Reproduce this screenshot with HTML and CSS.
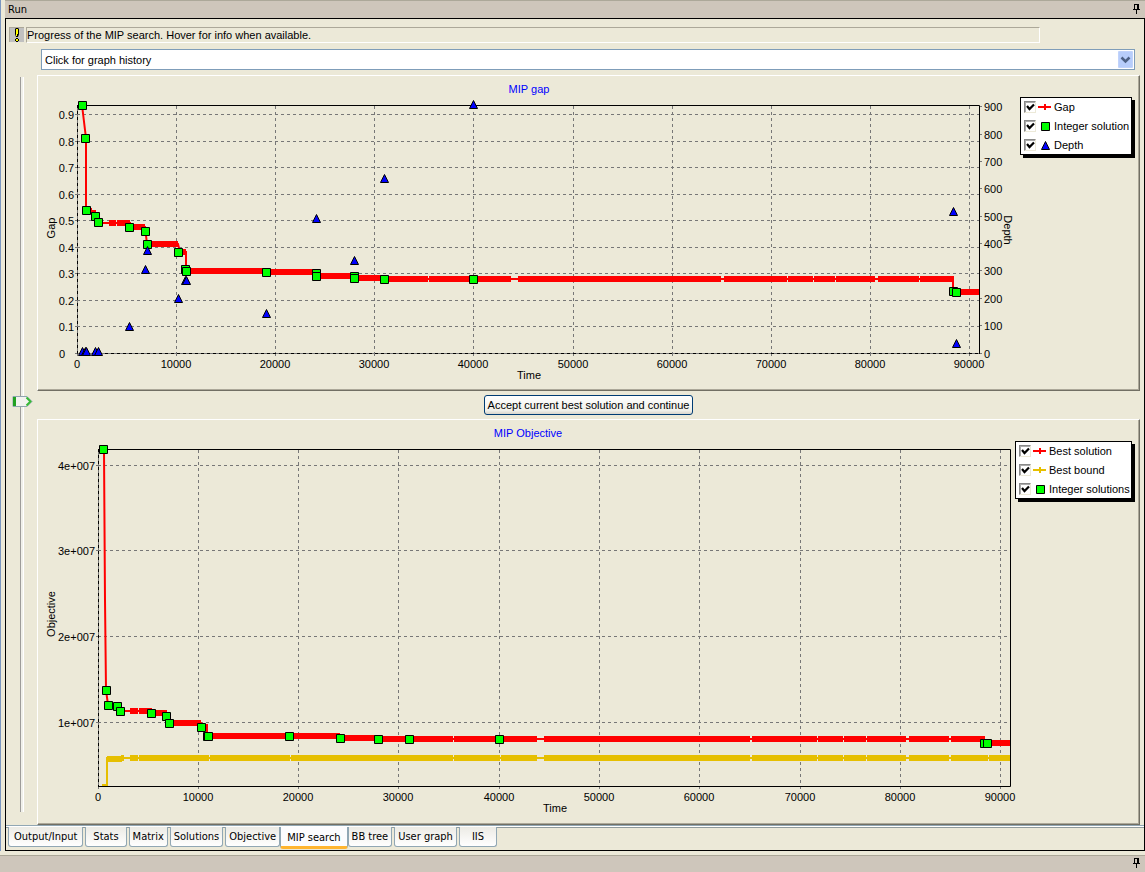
FILE: index.html
```
<!DOCTYPE html>
<html lang="en">
<head>
<meta charset="utf-8">
<title>Run</title>
<link rel="stylesheet" href="styles.css">
</head>
<body>
<svg class="defs" aria-hidden="true">
  <defs>
    <marker id="square" markerUnits="userSpaceOnUse" markerWidth="10" markerHeight="10" refX="5" refY="5">
      <path d="M1 1h8v8H1z" fill="#00ff00" stroke="#000"/>
    </marker>
    <marker id="triangle" markerUnits="userSpaceOnUse" markerWidth="10" markerHeight="10" refX="5" refY="5">
      <path d="M5 1L9 9H1Z" fill="#0000ff" stroke="#000"/>
    </marker>
    <symbol id="pin" viewBox="0 0 8 10">
      <path d="M1 0h5v5h1v1H4v4H3V6H0V5h1zM2 1v4h2V1z" fill-rule="evenodd"/>
    </symbol>
  </defs>
</svg>
<div class="app">
  <section class="window">
    <header class="titlebar"><span>Run</span><svg class="pin"><use href="#pin"/></svg></header>
    <main class="body">
      <div class="status">
        <svg class="alert" viewBox="0 0 15 15"><path fill="#c0c0c0" d="M0 0h15v15H0z"/><path d="M0 0h15v1H1v14H0z" fill="#aca899"/><path d="M7 1h2l1 1v5L9 10H7L6 7V2z"/><path d="M7 2h2v5H8v2H7z" fill="#ff0"/><path d="M7 11h2v1h1v2H9v1H7v-1H6v-2h1z"/><path fill="#ff0" d="M7 12h2v2H7z"/></svg>
        <p class="message">Progress of the MIP search. Hover for info when available.</p>
      </div>
      <div class="history">
        <select aria-label="Graph history"><option>Click for graph history</option></select>
        <svg class="arrow" viewBox="0 0 15 17"><rect width="15" height="17" rx="1" fill="#c1d3fb"/><rect x="1" y="1" width="13" height="15" fill="#b7cdfb"/><path d="M3.500 6.500l4 4 4-4" fill="none" stroke="#4d6185" stroke-width="2.500"/></svg>
      </div>
      <div class="workspace">
        <input class="splitter" type="range" min="0" max="100" value="44" aria-label="Graph split">
        <div class="graphs">
          <section class="graph">
            <svg class="plot" viewBox="38 77 978 312" role="img" aria-label="MIP gap">
              <text class="title" x="529" y="93">MIP gap</text>
              <path class="grid" d="M77 114.500H979M77 141.500H979M77 167.500H979M77 194.500H979M77 220.500H979M77 247.500H979M77 273.500H979M77 300.500H979M77 326.500H979M176.500 106V353M275.500 106V353M374.500 106V353M473.500 106V353M573.500 106V353M672.500 106V353M771.500 106V353M870.500 106V353M969.500 106V353"/>
              <path class="tick" d="M75 114.500h2M75 141.500h2M75 167.500h2M75 194.500h2M75 220.500h2M75 247.500h2M75 273.500h2M75 300.500h2M75 326.500h2M75 353.500h2M980 106.500h2M980 134.500h2M980 161.500h2M980 188.500h2M980 216.500h2M980 243.500h2M980 270.500h2M980 298.500h2M980 325.500h2M980 353.500h2M77.500 354v2M176.500 354v2M275.500 354v2M374.500 354v2M473.500 354v2M573.500 354v2M672.500 354v2M771.500 354v2M870.500 354v2M969.500 354v2"/>
              <path class="tick" d="M77.500 105V353.500H980"/>
              <path class="axis dashed" d="M77.500 105V353.500H980"/>
              <path class="axis" d="M77 105.500H979.500V354"/>
              <g class="end">
                <text x="74" y="119">0.9</text><text x="74" y="146">0.8</text><text x="74" y="172">0.7</text><text x="74" y="199">0.6</text><text x="74" y="225">0.5</text><text x="74" y="252">0.4</text><text x="74" y="278">0.3</text><text x="74" y="305">0.2</text><text x="74" y="331">0.1</text><text x="65" y="358">0</text>
              </g>
              <g>
                <text x="984" y="111">900</text><text x="984" y="139">800</text><text x="984" y="166">700</text><text x="984" y="193">600</text><text x="984" y="221">500</text><text x="984" y="248">400</text><text x="984" y="275">300</text><text x="984" y="303">200</text><text x="984" y="330">100</text><text x="984" y="358">0</text>
              </g>
              <g class="mid">
                <text x="77" y="368">0</text><text x="176" y="368">10000</text><text x="275" y="368">20000</text><text x="374" y="368">30000</text><text x="473" y="368">40000</text><text x="573" y="368">50000</text><text x="672" y="368">60000</text><text x="771" y="368">70000</text><text x="870" y="368">80000</text><text x="969" y="368">90000</text>
                <text x="529" y="379">Time</text>
                <text transform="translate(55 228) rotate(-90)">Gap</text>
                <text transform="translate(1004 230) rotate(90)">Depth</text>
              </g>
              <path class="line red" d="M82 105L85 130L86 138V210L95 216L98 223H130V227H145L147 244H178L180 252H186V271H266V272H316V276H354V278H384V279H953V292H979"/>
              <path class="band red" d="M88 211H92M91 213H96M109 223H116M117 223H130M130 227H145M148 244H178M180 252H186M186 271H266M266 272H316M316 276H354M354 278H384M384 279H428M429 279H511M518 279H721M724 279H787M788 279H813M814 279H835M836 279H875M878 279H919M920 279H954M956 292H979"/>
              <path class="squares" d="M82.500 105.500L85.500 138.500L86.500 210.500L95.500 216.500L98.500 222.500L129.500 227.500L145.500 231.500L147.500 244.500L178.500 252.500L185.500 269.500L186.500 271.500L266.500 272.500L316.500 273.500L316.500 276.500L354.500 276.500L354.500 278.500L384.500 279.500L473.500 279.500L953.500 291.500L956.500 292.500"/>
              <path class="triangles" d="M82.500 351.500L85.500 351.500L86.500 351.500L95.500 351.500L98.500 351.500L129.500 326.500L145.500 269.500L147.500 250.500L178.500 298.500L185.500 280.500L186.500 280.500L266.500 313.500L316.500 218.500L354.500 260.500L384.500 178.500L473.500 104.500L953.500 211.500L956.500 343.500"/>
            </svg>
            <fieldset class="legend narrow">
              <label><input type="checkbox" checked><svg viewBox="0 0 13 10"><path d="M0 5h13M7 2v6" fill="none" stroke="red" stroke-width="2"/></svg>Gap</label>
              <label><input type="checkbox" checked><svg viewBox="0 0 13 10"><path d="M3.500 1.500h8v8h-8z" fill="#00ff00" stroke="#000"/></svg>Integer solution</label>
              <label><input type="checkbox" checked><svg viewBox="0 0 13 10"><path d="M7.500 1.500l4 8h-8z" fill="#0000ff" stroke="#000"/></svg>Depth</label>
            </fieldset>
          </section>
          <button class="accept" type="button">Accept current best solution and continue</button>
          <section class="graph">
            <svg class="plot" viewBox="38 421 973 402" role="img" aria-label="MIP Objective">
              <text class="title" x="528" y="437">MIP Objective</text>
              <path class="grid" d="M98 465.500H1010M98 550.500H1010M98 636.500H1010M98 722.500H1010M198.500 450V786M298.500 450V786M398.500 450V786M499.500 450V786M599.500 450V786M699.500 450V786M800.500 450V786M900.500 450V786M1000.500 450V786"/>
              <path class="tick" d="M96 465.500h2M96 550.500h2M96 636.500h2M96 722.500h2M98.500 787v2M198.500 787v2M298.500 787v2M398.500 787v2M499.500 787v2M599.500 787v2M699.500 787v2M800.500 787v2M900.500 787v2M1000.500 787v2M98.500 449V787"/>
              <path class="axis dashed" d="M98.500 449V787"/>
              <path class="axis" d="M98 449.500H1010.500V786.500H98"/>
              <g class="end">
                <text x="95" y="470">4e+007</text><text x="95" y="555">3e+007</text><text x="95" y="641">2e+007</text><text x="95" y="727">1e+007</text>
              </g>
              <g class="mid">
                <text x="98" y="801">0</text><text x="198" y="801">10000</text><text x="298" y="801">20000</text><text x="398" y="801">30000</text><text x="499" y="801">40000</text><text x="599" y="801">50000</text><text x="699" y="801">60000</text><text x="800" y="801">70000</text><text x="900" y="801">80000</text><text x="1000" y="801">90000</text>
                <text x="555" y="812">Time</text>
                <text transform="translate(55 614) rotate(-90)">Objective</text>
              </g>
              <path class="line gold" d="M102 785H107V758H1010"/>
              <path class="band gold" d="M107 759H122M121 758H124M130 758H138M139 758H209M210 758H290M291 758H453M454 758H500M501 758H537M544 758H750M752 758H817M818 758H843M844 758H866M867 758H906M909 758H949M951 758H988M989 758H1010"/>
              <path class="line red" d="M104 450L105 600L106 690L108 705H117L120 711H152V713H167L169 723H201L203 728H207V736H340V739H984V743H1010"/>
              <path class="band red" d="M130 711H138M139 711H152M152 713H167M169 723H201M201 727H208M208 736H340M340 738H378M378 739H453M454 739H537M544 739H750M752 739H817M818 739H843M844 739H866M867 739H906M909 739H949M951 739H985M987 743H1010"/>
              <path class="squares" d="M103.500 449.500L106.500 690.500L108.500 705.500L117.500 706.500L120.500 711.500L151.500 713.500L166.500 716.500L169.500 723.500L201.500 727.500L207.500 736.500L208.500 736.500L289.500 736.500L340.500 738.500L378.500 739.500L409.500 739.500L499.500 739.500L984.500 743.500L987.500 743.500"/>
            </svg>
            <fieldset class="legend">
              <label><input type="checkbox" checked><svg viewBox="0 0 13 10"><path d="M0 5h13M7 2v6" fill="none" stroke="red" stroke-width="2"/></svg>Best solution</label>
              <label><input type="checkbox" checked><svg viewBox="0 0 13 10"><path d="M0 5h13M7 2v6" fill="none" stroke="#e6bf00" stroke-width="2"/></svg>Best bound</label>
              <label><input type="checkbox" checked><svg viewBox="0 0 13 10"><path d="M3.500 1.500h8v8h-8z" fill="#00ff00" stroke="#000"/></svg>Integer solutions</label>
            </fieldset>
          </section>
        </div>
      </div>
      <nav class="tabs">
        <button type="button" class="roomy">Output/Input</button>
        <button type="button" class="wide">Stats</button>
        <button type="button">Matrix</button>
        <button type="button">Solutions</button>
        <button type="button">Objective</button>
        <button type="button" class="active">MIP search</button>
        <button type="button">BB tree</button>
        <button type="button">User graph</button>
        <button type="button" class="widest">IIS</button>
      </nav>
    </main>
  </section>
  <footer class="dock"><svg class="pin"><use href="#pin"/></svg></footer>
</div>
</body>
</html>
```
FILE: styles.css
```
* {
  box-sizing: border-box;
}
body {
  margin: 0;
  background: #ece9d8;
  color: #000;
  font: 11px/14px "Liberation Sans", Arial, sans-serif;
}
.defs {
  position: absolute;
  width: 0;
  height: 0;
}
.app {
  display: flex;
  flex-direction: column;
  min-height: 100vh;
}
.window {
  border-left: 1px solid #7a96c0;
  padding-left: 4px;
}
.titlebar {
  display: flex;
  align-items: center;
  justify-content: space-between;
  height: 18px;
  padding: 1px 4px 0 3px;
  border-top: 1px solid #aca899;
  background: #cec6bb;
  font-family: "DejaVu Sans Condensed", "DejaVu Sans", sans-serif;
}
.pin {
  width: 8px;
  height: 10px;
}
.titlebar .pin {
  margin-bottom: 2px;
}
.body {
  border: 1px solid #000;
  padding-top: 8px;
}
.status {
  display: flex;
  gap: 2px;
  margin: 0 104px 0 3px;
}
.alert {
  width: 15px;
  height: 15px;
}
.message {
  flex: 1;
  margin: 0;
  border: 1px solid;
  border-color: #aca899 #fff #fff #aca899;
}
.history {
  position: relative;
  margin: 6px 9px 0 35px;
}
.history select {
  display: block;
  width: 100%;
  height: 21px;
  padding: 0 3px;
  border: 1px solid #7f9db9;
  border-radius: 0;
  background: #fff;
  color: #000;
  font: inherit;
  appearance: none;
}
.arrow {
  position: absolute;
  top: 2px;
  right: 2px;
  width: 15px;
  height: 17px;
  pointer-events: none;
}
.workspace {
  display: flex;
  gap: 4px;
  margin: 5px 4px 0 6px;
}
.splitter {
  width: 21px;
  margin: 2px 0 13px;
  appearance: none;
  background: linear-gradient(90deg, transparent 8px, #9d9c99 8px 9px, #f0f0ea 9px 11px, #fff 11px 12px, transparent 12px);
  writing-mode: vertical-lr;
}
.splitter::-webkit-slider-thumb {
  appearance: none;
  width: 21px;
  height: 11px;
  background: url("data:image/svg+xml,%3Csvg xmlns='http://www.w3.org/2000/svg' viewBox='0 0 21 11'%3E%3Cpath d='M1 .5h14l5 5-5 5H1z' fill='%23f3f3ef' stroke='%238fa5b0'/%3E%3Cpath d='M1 1h3v9H1z' fill='%2321a121'/%3E%3Cpath d='M14.500 1.500l4 4-4 4' fill='none' stroke='%2336b836' stroke-width='2'/%3E%3C/svg%3E");
}
.graphs {
  flex: 1;
  display: flex;
  flex-direction: column;
  gap: 4px;
}
.graph {
  display: flex;
  align-items: flex-start;
  gap: 4px;
  padding: 1px 1px 1px 0;
  border: 1px solid;
  border-color: #fff #716f64 #716f64 #fff;
  box-shadow: inset -1px -1px #aca899;
}
.plot {
  display: block;
  flex: 1;
  min-width: 0;
  overflow: visible;
}
.plot text {
  font-size: 11px;
}
.plot .title {
  fill: #00f;
  text-anchor: middle;
}
.end {
  text-anchor: end;
}
.mid {
  text-anchor: middle;
}
.grid,
.tick,
.axis,
.line,
.band {
  fill: none;
}
.grid {
  stroke: #777;
  stroke-dasharray: 3 3;
}
.tick {
  stroke: #777;
}
.axis {
  stroke: #000;
}
.dashed {
  stroke-dasharray: 3 3;
}
.line {
  stroke-width: 2;
}
.band {
  stroke-width: 6;
}
.red {
  stroke: #f00;
}
.gold {
  stroke: #e6bf00;
}
.squares {
  fill: none;
  marker: url(#square);
}
.triangles {
  fill: none;
  marker: url(#triangle);
}
.legend {
  display: flex;
  flex: 0 0 117px;
  flex-direction: column;
  gap: 5px;
  min-width: 0;
  margin: 20px 6px 0 0;
  padding: 2px 0 2px 3px;
  border: 1px solid #000;
  background: #fff;
  box-shadow: 3px 3px #000;
  white-space: nowrap;
}
.narrow {
  flex-basis: 112px;
}
.legend label {
  display: flex;
  align-items: center;
}
.legend input {
  appearance: none;
  width: 12px;
  height: 12px;
  margin: 0 2px 0 0;
  border: 1px solid;
  border-color: #888 #ece9d8 #ece9d8 #888;
  box-shadow: inset 1px 1px #aaa;
}
.legend input:checked {
  background: url("data:image/svg+xml,%3Csvg xmlns='http://www.w3.org/2000/svg' viewBox='0 0 10 10'%3E%3Cpath d='M2 4l2.500 3L9 2.500' fill='none' stroke='black' stroke-width='2.200'/%3E%3C/svg%3E") center / 10px 10px no-repeat;
}
.legend svg {
  width: 13px;
  height: 10px;
  margin-right: 3px;
}
.accept {
  align-self: center;
  height: 20px;
  padding: 0 3px;
  border: 1px solid #003c74;
  border-radius: 3px;
  background: linear-gradient(#fff, #f0f0ea 80%, #d9d5cc);
  color: #000;
  font: inherit;
}
.tabs {
  display: flex;
  align-items: flex-start;
  gap: 2px;
  height: 25px;
  padding-left: 2px;
  border-top: 1px solid #91a7b4;
  box-shadow: inset 0 1px #fff, inset 0 2px #919b9c;
}
.tabs button {
  height: 20px;
  margin-top: 1px;
  padding: 1px 3px 0;
  border: 1px solid #91a7b4;
  border-top: 0;
  border-radius: 0 0 3px 3px;
  background: linear-gradient(#ecebe5, #fff);
  color: #000;
  font: 11px/14px "DejaVu Sans Condensed", "DejaVu Sans", sans-serif;
}
.tabs .roomy {
  padding: 1px 5px 0;
}
.tabs .wide {
  padding: 1px 7px 0;
}
.tabs .widest {
  padding: 1px 12px 0;
}
.tabs .active {
  height: 22px;
  margin: 1px -2px 0;
  padding: 2px 6px 0;
  border-bottom: 3px solid #ffb530;
  background: #fcfcfe;
}
.dock {
  display: flex;
  flex: 1;
  justify-content: flex-end;
  margin-top: 4px;
  padding: 2px 4px 0 0;
  border-top: 1px solid #aca899;
  background: #cec6bb;
}
```
